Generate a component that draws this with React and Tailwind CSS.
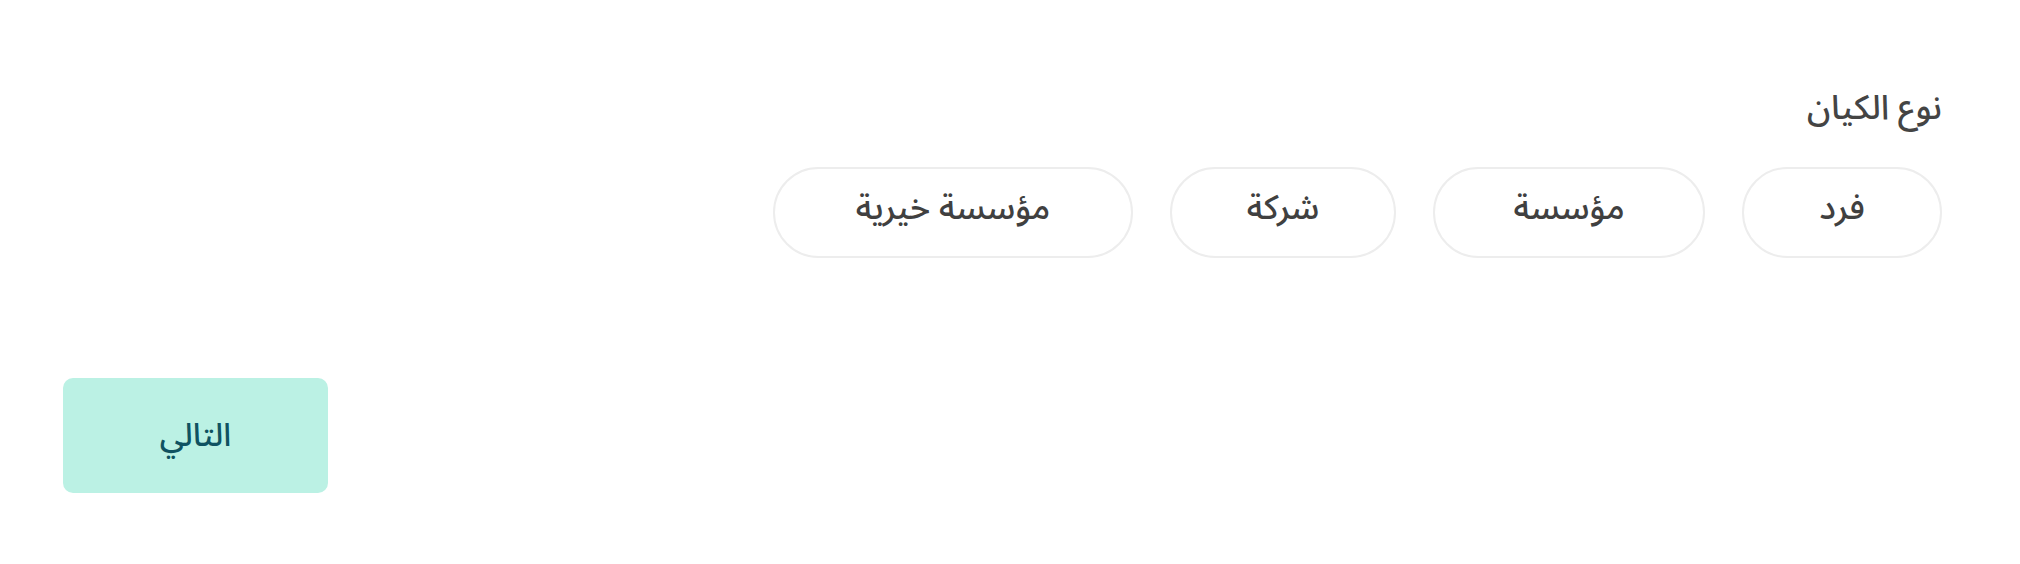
import React, { useState } from 'react';

const entityTypes = [
  { id: 'individual', label: 'فرد', width: 'w-[200px]' },
  { id: 'establishment', label: 'مؤسسة', width: 'w-[272px]' },
  { id: 'company', label: 'شركة', width: 'w-[226px]' },
  { id: 'charity', label: 'مؤسسة خيرية', width: 'w-[360px]' },
];

const App = () => {
  const [selected, setSelected] = useState(null);

  return (
    <div
      dir="rtl"
      className="min-h-screen bg-white pr-[78px] pl-[63px] pt-[84px]"
      style={{ fontFamily: '"Noto Sans Arabic", "DejaVu Sans", sans-serif' }}
    >
      {/* Entity type */}
      <div>
        <h3 className="text-[34px] leading-[48px] font-medium text-[#444444]">نوع الكيان</h3>
        <div className="mt-[35px] flex gap-[37px]">
          {entityTypes.map((type) => (
            <button
              key={type.id}
              onClick={() => setSelected(type.id)}
              className={`${type.width} h-[91px] rounded-full border-2 pb-[8px] text-[34px] font-medium text-[#404040] ${
                selected === type.id ? 'border-[#0f5261] bg-[#eafaf6]' : 'border-[#ededed] bg-white'
              }`}
            >
              {type.label}
            </button>
          ))}
        </div>
      </div>

      {/* Next */}
      <div className="mt-[120px] flex justify-end">
        <button className="w-[265px] h-[115px] rounded-[10px] bg-[#bbf1e4] text-[32px] font-medium text-[#0f5261]">
          التالي
        </button>
      </div>
    </div>
  );
};

export default App;
